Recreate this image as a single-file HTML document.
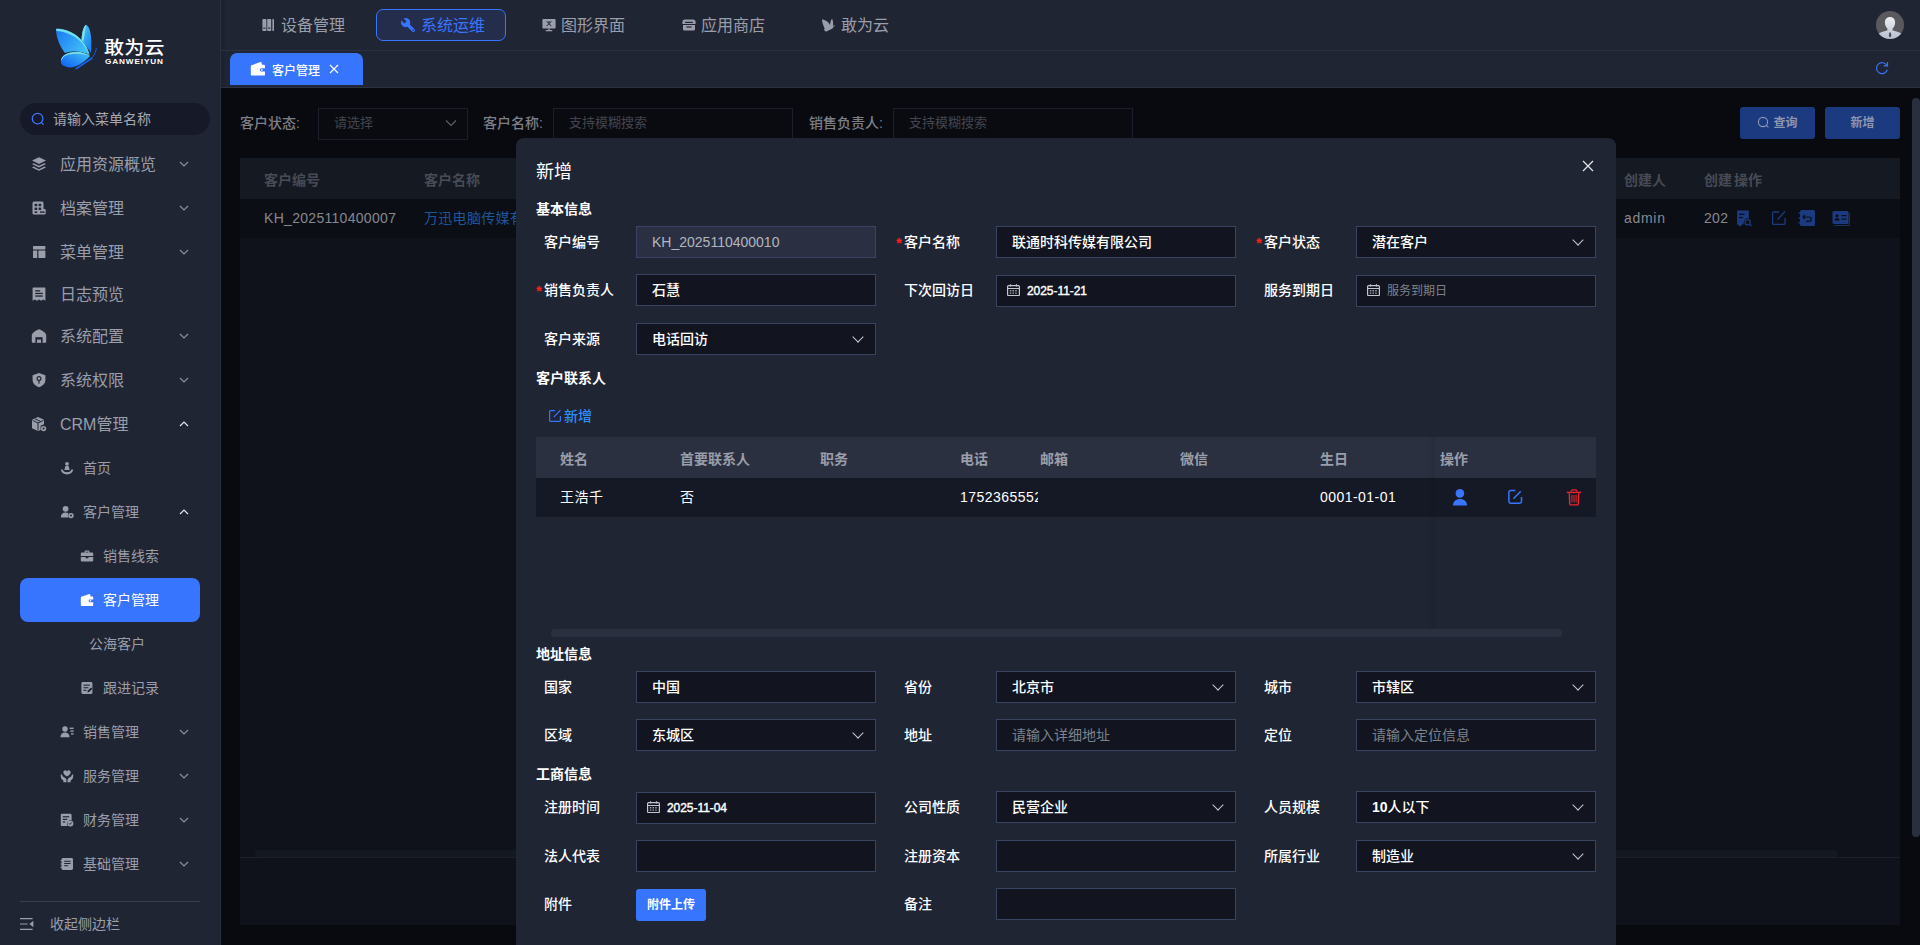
<!DOCTYPE html>
<html lang="zh-CN">
<head>
<meta charset="utf-8">
<title>客户管理</title>
<style>
*{box-sizing:border-box;margin:0;padding:0}
html,body{width:1920px;height:945px;overflow:hidden;background:#090a10}
body{position:relative;font-family:"Liberation Sans","Noto Sans CJK SC",sans-serif;font-size:14px;color:#fff;-webkit-font-smoothing:antialiased}
.abs{position:absolute}
svg{display:block}
/* ---------- sidebar ---------- */
#side{position:absolute;left:0;top:0;width:221px;height:945px;background:#202534;border-right:1px solid #2b3042}
#search{position:absolute;left:20px;top:103px;width:190px;height:32px;border-radius:16px;background:#161a28}
#search span{position:absolute;left:33px;top:0;line-height:32px;font-size:14px;color:#a4a8b3}
.m1{position:absolute;left:0;width:220px;height:44px}
.m1 .ic{position:absolute;left:31px;top:14px;width:16px;height:16px}
.m1 .tx{position:absolute;left:60px;top:1px;line-height:44px;font-size:16px;color:#9a9eaa;white-space:nowrap}
.m2 .ic{left:60px;top:15px;width:14px;height:14px}
.m2 .tx{left:83px;font-size:14px;top:0}
.m3 .ic{left:80px;top:15px;width:14px;height:14px}
.m3 .tx{left:103px;font-size:14px;top:0}
.arr{position:absolute;left:179px;top:18px;width:10px;height:8px}
#active{position:absolute;left:20px;top:578px;width:180px;height:44px;border-radius:8px;background:#3875ff}
/* ---------- top ---------- */
#top{position:absolute;left:221px;top:0;width:1699px;height:51px;background:linear-gradient(to right,#1c202d,#202534 6px);border-bottom:1px solid #2c3142}
.nav{position:absolute;top:10px;height:32px;line-height:32px;font-size:16px;color:#9a9eaa;white-space:nowrap}
.nav svg{position:absolute;top:8px}
#navsel{position:absolute;left:155px;top:9px;width:130px;height:32px;border:1px solid #3875ff;border-radius:7px;background:#252d4d}
#tabs{position:absolute;left:221px;top:51px;width:1699px;height:37px;background:linear-gradient(to right,#1c202d,#202534 6px);border-bottom:1px solid #2c3142}
#tab{position:absolute;left:9px;top:2px;width:133px;height:32px;background:#3875ff;border-radius:7px 7px 0 0}
#tab span{position:absolute;left:42px;top:0;line-height:36px;font-size:12px;color:#fff;font-weight:500}
/* ---------- content (dimmed) ---------- */
#content{position:absolute;left:221px;top:88px;width:1699px;height:857px;background:#090a10}
.flabel{position:absolute;top:19px;line-height:32px;font-size:14px;color:#7c7f87;white-space:nowrap;font-weight:500}
.finput{position:absolute;top:20px;height:32px;border:1px solid #1b1f2c;background:#0a0b11;font-size:13px;color:#42454e;line-height:28px;padding-left:15px}
.btn{position:absolute;top:19px;width:75px;height:32px;border-radius:3px;background:#1c3a80;color:#8c96b0;font-size:12px;line-height:32px;text-align:center;font-weight:bold}
#panel{position:absolute;left:19px;top:70px;width:1660px;height:767px;background:#0f121b}
#thead{position:absolute;left:0;top:0;width:1660px;height:41px;background:#151922}
#thead span{position:absolute;top:0;line-height:44px;font-size:14px;font-weight:bold;color:#474b55;white-space:nowrap}
#trow{position:absolute;left:0;top:41px;width:1660px;height:39px;background:#0c0e16}
#trow span{position:absolute;top:0;line-height:38px;font-size:14px;color:#85888f;white-space:nowrap;letter-spacing:0.3px}

/* ---------- modal ---------- */
#modal{position:absolute;left:516px;top:138px;width:1100px;height:820px;background:#202534;border-radius:8px}
.mtitle{position:absolute;left:20px;top:20px;line-height:28px;font-size:18px;color:#fff}
.sec{position:absolute;left:20px;line-height:22px;font-size:14px;font-weight:bold;color:#fff;white-space:nowrap}
.lb{position:absolute;height:32px;line-height:32px;font-size:14px;color:#fff;white-space:nowrap;font-weight:500}
.lb i{position:absolute;left:-8px;top:1px;font-style:normal;color:#ff1f1f;font-weight:bold;font-size:15px}
.in{position:absolute;width:240px;height:32px;border:1px solid #394460;background:#12151f;line-height:30px;font-size:14px;color:#fff;padding-left:15px;white-space:nowrap;font-weight:500}
.in.dis{background:#2a3041;color:#b3b6c0;font-weight:normal;border-color:#3b4364}
.in.ph{color:#7e828c;font-weight:normal}
.in.sel::after{content:"";position:absolute;right:13px;top:9px;width:7px;height:7px;border-right:1.400px solid #c5c8d0;border-bottom:1.400px solid #c5c8d0;transform:rotate(45deg)}
.in.date{font-size:12px;padding-left:30px;font-weight:normal;-webkit-text-stroke:0.4px #fff;letter-spacing:-0.05px}
.in.date.ph{-webkit-text-stroke:0;letter-spacing:0}
.th{position:absolute;top:301px;line-height:40px;font-size:14px;font-weight:bold;color:#9a9eaa;white-space:nowrap}
.td{position:absolute;top:339px;line-height:40px;font-size:14px;color:#fff;white-space:nowrap;letter-spacing:0.45px}
</style>
</head>
<body>
<!-- SIDEBAR -->
<div id="side">
  <!-- logo -->
  <svg class="abs" style="left:54px;top:23px" width="46" height="48" viewBox="0 0 46 48">
    <defs>
      <linearGradient id="lg1" x1="0" y1="0" x2="1" y2="0.6"><stop offset="0" stop-color="#1b74f2"/><stop offset="1" stop-color="#40c1f8"/></linearGradient>
      <linearGradient id="lg2" x1="0" y1="1" x2="1" y2="0.2"><stop offset="0" stop-color="#0d5cf0"/><stop offset="1" stop-color="#3fbdf7"/></linearGradient>
      <linearGradient id="lg3" x1="0.2" y1="0" x2="0.8" y2="1"><stop offset="0" stop-color="#45c3f8"/><stop offset="1" stop-color="#1a7df0"/></linearGradient>
    </defs>
    <path d="M27.500 17 C28 9 29.500 3.500 32 1.800 C36 3 38.500 14 37 30 C34 26 31 21 27.500 17 Z" fill="url(#lg3)"/>
    <path d="M27.500 17 C28 9 29.500 3.500 32 1.800 C31.500 6 31 12 29.200 18.800 Z" fill="#7be3e6"/>
    <path d="M2 6 C10 5 22 10 29 19 C33 24 35 29 35.5 32 C30 29 20 27 11 30 C6 24 2 14 2 6 Z" fill="url(#lg1)"/>
    <path d="M2 6 C10 5 22 10 29 19 C33 24 35 29 35.5 32 C33 26 30 22 27 19 C20 12 10 8 2.5 8 Z" fill="#6fe0e8"/>
    <path d="M7 37 C8 32 14 29 22 29 C28 29 33 31 36 33 C30 40 20 46 13 44 C9 43 6 41 7 37 Z" fill="url(#lg2)"/>
    <path d="M7 37 C8 32 14 29 22 29 C28 29 33 31 36 33 C30 31 24 30.5 19 31 C13 31.5 9 33 7.5 37.5 Z" fill="#79e2e4"/>
    <path d="M21 45.5 L38 34 L39 35.5 L22.5 46.5 Z" fill="#1565f0"/>
    <path d="M38.5 34 C41 31 42 28 42.3 25" stroke="#1565f0" stroke-width="0.9" fill="none"/>
  </svg>
  <div class="abs" style="left:104px;top:33px;font-size:20px;line-height:26px;color:#fff;letter-spacing:0.3px;white-space:nowrap;font-weight:500;transform-origin:0 100%;transform:translateY(0.5px) scale(1,0.92)">敢为云</div>
  <div class="abs" style="left:105px;top:57px;font-size:7px;line-height:9px;color:#fff;letter-spacing:0.75px;white-space:nowrap;font-weight:bold;transform-origin:0 0;transform:translateY(-0.5px) scale(1.17,1.05)">GANWEIYUN</div>
  <!-- search -->
  <div id="search">
    <svg class="abs" style="left:10px;top:8px" width="16" height="16" viewBox="0 0 16 16"><circle cx="7.6" cy="7.6" r="5.3" fill="none" stroke="#3875ff" stroke-width="1.3"/><path d="M11.4 11.6 L13.2 13.4" stroke="#3875ff" stroke-width="1.3" stroke-linecap="round"/></svg>
    <span>请输入菜单名称</span>
  </div>
  <div id="active"></div>
  <!-- level 1 -->
  <div class="m1" style="top:142px"><svg class="ic" viewBox="0 0 16 16"><path d="M8 1.2 L15 4.6 L8 8 L1 4.6 Z" fill="#9a9eaa"/><path d="M2.6 7.2 L1 8 L8 11.4 L15 8 L13.4 7.2 L8 9.8 Z" fill="#9a9eaa"/><path d="M2.6 10.6 L1 11.4 L8 14.8 L15 11.4 L13.4 10.6 L8 13.2 Z" fill="#9a9eaa"/></svg><span class="tx">应用资源概览</span><svg class="arr" viewBox="0 0 10 8"><path d="M1 2 L5 6 L9 2" fill="none" stroke="#8d919d" stroke-width="1.2"/></svg></div>
  <div class="m1" style="top:186px"><svg class="ic" viewBox="0 0 16 16"><path d="M3 1.5 h8 a1.5 1.5 0 0 1 1.5 1.5 v6 h1.2 a1 1 0 0 1 1 1 v3 a1.5 1.5 0 0 1 -1.5 1.5 h-10.2 a1.5 1.5 0 0 1 -1.5 -1.5 v-10 a1.5 1.5 0 0 1 1.5 -1.5 Z" fill="#9a9eaa"/><rect x="3.6" y="3.8" width="2.6" height="2.4" fill="#202534"/><rect x="7.6" y="3.8" width="2.6" height="2.4" fill="#202534"/><rect x="3.6" y="7.6" width="2.6" height="2.4" fill="#202534"/><rect x="7.6" y="7.6" width="2.6" height="2.4" fill="#202534"/><rect x="3.6" y="11.4" width="2.6" height="1.6" fill="#202534"/><rect x="9" y="11.4" width="4.6" height="1.4" fill="#202534"/></svg><span class="tx">档案管理</span><svg class="arr" viewBox="0 0 10 8"><path d="M1 2 L5 6 L9 2" fill="none" stroke="#8d919d" stroke-width="1.2"/></svg></div>
  <div class="m1" style="top:230px"><svg class="ic" viewBox="0 0 16 16"><rect x="2" y="2" width="12.4" height="3.4" rx="0.6" fill="#9a9eaa"/><rect x="2" y="6.6" width="4.2" height="7.4" rx="0.6" fill="#9a9eaa"/><rect x="7.4" y="6.6" width="7" height="7.4" rx="0.6" fill="#9a9eaa"/></svg><span class="tx">菜单管理</span><svg class="arr" viewBox="0 0 10 8"><path d="M1 2 L5 6 L9 2" fill="none" stroke="#8d919d" stroke-width="1.2"/></svg></div>
  <div class="m1" style="top:272px"><svg class="ic" viewBox="0 0 16 16"><path d="M2.2 1.5 h11.6 a0.6 0.6 0 0 1 .6 .6 v12.6 l-2.1 -1.3 l-2.1 1.3 l-2.1 -1.3 l-2.1 1.3 l-2.1 -1.3 l-2.3 1.3 v-12.6 a0.6 0.6 0 0 1 .6 -.6 Z" fill="#9a9eaa"/><rect x="4.2" y="4.2" width="5" height="1.3" fill="#202534"/><rect x="4.2" y="6.8" width="7.6" height="1.3" fill="#202534"/><rect x="4.2" y="9.4" width="7.6" height="1.3" fill="#202534"/></svg><span class="tx">日志预览</span></div>
  <div class="m1" style="top:314px"><svg class="ic" viewBox="0 0 16 16"><path d="M8 1.2 C11 2 15 5 15.2 7 V14 a0.8 0.8 0 0 1 -.8 .8 H1.6 a0.8 0.8 0 0 1 -.8 -.8 V7 C1 5 5 2 8 1.2 Z" fill="#9a9eaa"/><rect x="4.4" y="9.2" width="7.2" height="5.6" fill="#202534"/><rect x="6" y="11.6" width="4" height="3.2" fill="#9a9eaa"/></svg><span class="tx">系统配置</span><svg class="arr" viewBox="0 0 10 8"><path d="M1 2 L5 6 L9 2" fill="none" stroke="#8d919d" stroke-width="1.2"/></svg></div>
  <div class="m1" style="top:358px"><svg class="ic" viewBox="0 0 16 16"><path d="M8 1 L14.4 3.2 V8 C14.4 11.6 11.6 14 8 15.2 C4.400 14 1.6 11.6 1.6 8 V3.2 Z" fill="#9a9eaa"/><circle cx="8" cy="6.6" r="1.9" fill="none" stroke="#202534" stroke-width="1.2"/><rect x="7.4" y="8" width="1.2" height="3.6" fill="#202534"/></svg><span class="tx">系统权限</span><svg class="arr" viewBox="0 0 10 8"><path d="M1 2 L5 6 L9 2" fill="none" stroke="#8d919d" stroke-width="1.2"/></svg></div>
  <div class="m1" style="top:402px"><svg class="ic" viewBox="0 0 16 16"><path d="M7 1 L13 3.8 V8.200 L9.600 9.800 V14 L7 15 L1 12.2 V3.800 Z" fill="#9a9eaa"/><path d="M1.6 4.400 L7 7 L12.400 4.400 M7 7 V14.400 M4 2.800 L9.800 5.600" stroke="#202534" stroke-width="1" fill="none"/><circle cx="12.600" cy="12.600" r="2.600" fill="#9a9eaa"/><circle cx="12.600" cy="12.600" r="1" fill="#202534"/></svg><span class="tx">CRM管理</span><svg class="arr" viewBox="0 0 10 8"><path d="M1 6 L5 2 L9 6" fill="none" stroke="#e4e6ea" stroke-width="1.2"/></svg></div>
  <!-- level 2 -->
  <div class="m1 m2" style="top:446px"><svg class="ic" viewBox="0 0 14 14"><circle cx="7" cy="2.8" r="1.9" fill="#9a9eaa"/><path d="M5.400 5 h3.200 l1 4 h-5.200 Z" fill="#9a9eaa"/><path d="M1 8.600 h1.600 c.400 1.600 2 2.600 4.400 2.600 s4 -1 4.400 -2.600 H13 v1 c-.600 2.400 -2.800 3.800 -6 3.800 s-5.400 -1.400 -6 -3.800 Z" fill="#9a9eaa"/></svg><span class="tx">首页</span></div>
  <div class="m1 m2" style="top:490px"><svg class="ic" viewBox="0 0 14 14"><circle cx="5.600" cy="3.800" r="2.900" fill="#9a9eaa"/><path d="M0.800 12.600 C0.800 9.400 2.800 7.600 5.600 7.600 C6.800 7.600 7.800 7.900 8.600 8.500 C7.600 9.600 7.600 11.400 8.600 12.600 Z" fill="#9a9eaa"/><circle cx="11" cy="10.600" r="2.700" fill="#9a9eaa"/><circle cx="11" cy="10.600" r="1" fill="#202534"/></svg><span class="tx">客户管理</span><svg class="arr" viewBox="0 0 10 8"><path d="M1 6 L5 2 L9 6" fill="none" stroke="#e4e6ea" stroke-width="1.2"/></svg></div>
  <!-- level 3 -->
  <div class="m1 m3" style="top:534px"><svg class="ic" viewBox="0 0 14 14"><path d="M4.600 3.600 V2.600 a1 1 0 0 1 1 -1 h2.800 a1 1 0 0 1 1 1 v1 h2.800 a1 1 0 0 1 1 1 V7 H0.800 V4.600 a1 1 0 0 1 1 -1 Z M5.800 2.800 v.8 h2.400 v-.8 Z" fill="#9a9eaa" fill-rule="evenodd"/><path d="M0.800 8 H5.600 v1.200 h2.800 V8 H13.200 v3.600 a1 1 0 0 1 -1 1 H1.800 a1 1 0 0 1 -1 -1 Z" fill="#9a9eaa"/></svg><span class="tx">销售线索</span></div>
  <div class="m1 m3" style="top:578px"><svg class="ic" viewBox="0 0 14 14"><path d="M2 3.600 L9.400 1 a0.600 0.600 0 0 1 .8 .4 L10.600 3.400 H12.200 a1 1 0 0 1 1 1 V6.400 H10 a1.400 1.400 0 0 0 0 2.800 H13.200 V12 a1 1 0 0 1 -1 1 H1.800 a1 1 0 0 1 -1 -1 V4.800 a1.200 1.200 0 0 1 1.200 -1.200 Z" fill="#fff"/><circle cx="10.400" cy="7.800" r="0.800" fill="#fff"/></svg><span class="tx" style="color:#fff">客户管理</span></div>
  <div class="m1 m3" style="top:622px"><span class="tx" style="left:89px">公海客户</span></div>
  <div class="m1 m3" style="top:666px"><svg class="ic" viewBox="0 0 14 14"><rect x="1.400" y="1" width="11" height="12" rx="1.400" fill="#9a9eaa"/><rect x="3.400" y="3.600" width="6.600" height="1.100" fill="#202534"/><rect x="3.400" y="6.200" width="5" height="1.100" fill="#202534"/><rect x="3.400" y="8.800" width="3" height="1.100" fill="#202534"/><path d="M7.400 11.400 L7.800 9.600 L11 6.400 L12.400 7.800 L9.200 11 Z" fill="#202534"/></svg><span class="tx">跟进记录</span></div>
  <div class="m1 m2" style="top:710px"><svg class="ic" viewBox="0 0 14 14"><circle cx="5" cy="4" r="2.700" fill="#9a9eaa"/><path d="M0.400 12.200 C0.400 9.200 2.400 7.400 5 7.400 S9.600 9.200 9.600 12.200 Z" fill="#9a9eaa"/><rect x="9.600" y="2.600" width="4" height="1.400" fill="#9a9eaa"/><rect x="10.400" y="5.400" width="3.200" height="1.400" fill="#9a9eaa"/><rect x="11" y="8.200" width="2.600" height="1.400" fill="#9a9eaa"/></svg><span class="tx">销售管理</span><svg class="arr" viewBox="0 0 10 8"><path d="M1 2 L5 6 L9 2" fill="none" stroke="#8d919d" stroke-width="1.2"/></svg></div>
  <div class="m1 m2" style="top:754px"><svg class="ic" viewBox="0 0 14 14"><path d="M7 7.600 C4.600 6 3.400 4.800 3.400 3.200 C3.400 1.200 6 0.600 7 2.400 C8 0.600 10.600 1.200 10.600 3.200 C10.600 4.800 9.400 6 7 7.600 Z" fill="#9a9eaa"/><path d="M0.800 5.200 C2 5.200 2.400 6 2.600 7.200 L5.600 9.200 C6.600 10 6.600 11.400 6.400 13.200 H3.400 V11.400 C1.600 10.600 0.800 9 0.800 7.200 Z" fill="#9a9eaa"/><path d="M13.200 5.200 C12 5.200 11.600 6 11.400 7.200 L8.400 9.200 C7.400 10 7.400 11.400 7.600 13.200 H10.600 V11.400 C12.400 10.600 13.200 9 13.200 7.200 Z" fill="#9a9eaa"/></svg><span class="tx">服务管理</span><svg class="arr" viewBox="0 0 10 8"><path d="M1 2 L5 6 L9 2" fill="none" stroke="#8d919d" stroke-width="1.2"/></svg></div>
  <div class="m1 m2" style="top:798px"><svg class="ic" viewBox="0 0 14 14"><path d="M1.800 0.800 h8.400 a1.400 1.400 0 0 1 1.400 1.400 v5 a3.800 3.800 0 0 0 -4 5.800 H1.800 a1 1 0 0 1 -1 -1 V1.800 a1 1 0 0 1 1 -1 Z" fill="#9a9eaa"/><rect x="2.800" y="3.200" width="6.400" height="1.200" fill="#202534"/><rect x="2.800" y="5.800" width="4.400" height="1.200" fill="#202534"/><rect x="2.800" y="8.400" width="2.400" height="1.200" fill="#202534"/><circle cx="10.400" cy="10.400" r="3" fill="#9a9eaa"/><path d="M9 10.400 L10 11.400 L11.800 9.400" stroke="#202534" stroke-width="1" fill="none"/></svg><span class="tx">财务管理</span><svg class="arr" viewBox="0 0 10 8"><path d="M1 2 L5 6 L9 2" fill="none" stroke="#8d919d" stroke-width="1.2"/></svg></div>
  <div class="m1 m2" style="top:842px"><svg class="ic" viewBox="0 0 14 14"><rect x="1.600" y="1" width="11.400" height="12" rx="1.400" fill="#9a9eaa"/><rect x="0.600" y="3" width="2" height="1.200" fill="#9a9eaa"/><rect x="0.600" y="6.400" width="2" height="1.200" fill="#9a9eaa"/><rect x="0.600" y="9.800" width="2" height="1.200" fill="#9a9eaa"/><rect x="4.200" y="3.800" width="6.400" height="1" fill="#202534"/><rect x="4.200" y="6" width="6.400" height="1" fill="#202534"/><rect x="4.200" y="8.200" width="4" height="1" fill="#202534"/></svg><span class="tx">基础管理</span><svg class="arr" viewBox="0 0 10 8"><path d="M1 2 L5 6 L9 2" fill="none" stroke="#8d919d" stroke-width="1.2"/></svg></div>
  <div class="abs" style="left:20px;top:901px;width:180px;height:1px;background:#3a3f50"></div>
  <svg class="abs" style="left:20px;top:917px" width="14" height="14" viewBox="0 0 14 14"><path d="M0 1.600 H12.600 M0 7 H7.600 M0 12.400 H12.600" stroke="#9a9eaa" stroke-width="1.200"/><path d="M13.400 3.800 V10.200 L9.400 7 Z" fill="#9a9eaa"/></svg>
  <div class="abs" style="left:50px;top:913px;line-height:22px;font-size:14px;color:#9a9eaa;white-space:nowrap">收起侧边栏</div>
</div>
<!-- TOP NAV -->
<div id="top">
  <div id="navsel"></div>
  <div class="nav" style="left:60px"><svg style="left:-19px" width="14" height="14" viewBox="0 0 14 14"><rect x="0.400" y="1" width="4" height="12" rx="0.800" fill="#9a9eaa"/><rect x="5.200" y="1" width="4" height="12" rx="0.800" fill="#9a9eaa"/><rect x="10.400" y="1" width="1.600" height="12" rx="0.600" fill="#9a9eaa"/><rect x="1.200" y="9.600" width="2.400" height="1" fill="#202534"/><rect x="6" y="9.600" width="2.400" height="1" fill="#202534"/></svg>设备管理</div>
  <div class="nav" style="left:200px;color:#3875ff"><svg style="left:-21px;top:7px" width="16" height="16" viewBox="0 0 16 16"><circle cx="5.600" cy="5.600" r="4.600" fill="#3875ff"/><path d="M5.400 5.400 L0.500 0.500" stroke="#252d4d" stroke-width="3"/><path d="M8 8 L13.400 13.400" stroke="#3875ff" stroke-width="3.200" stroke-linecap="round"/><circle cx="13.200" cy="13.200" r="0.700" fill="#252d4d"/></svg>系统运维</div>
  <div class="nav" style="left:340px"><svg style="left:-19px" width="14" height="14" viewBox="0 0 14 14"><rect x="0.400" y="1" width="13.200" height="9.400" rx="1" fill="#9a9eaa"/><rect x="6.300" y="10.400" width="1.400" height="1.800" fill="#9a9eaa"/><rect x="3.600" y="12" width="6.800" height="1.300" rx="0.500" fill="#9a9eaa"/><path d="M4.600 3.200 L9.400 8.200 M9.400 3.200 L4.600 8.200 M7 3 V5" stroke="#202534" stroke-width="1" fill="none"/></svg>图形界面</div>
  <div class="nav" style="left:480px"><svg style="left:-19px" width="14" height="14" viewBox="0 0 14 14"><path d="M2.600 1.400 h8.800 a2.400 2.400 0 0 1 2.200 2.400 v2.200 h-13.200 v-2.200 a2.400 2.400 0 0 1 2.200 -2.400 Z" fill="#9a9eaa"/><rect x="3" y="3.800" width="8" height="1.200" fill="#202534"/><path d="M1 7 H13 V11.200 a1.400 1.400 0 0 1 -1.400 1.400 H2.400 a1.400 1.400 0 0 1 -1.400 -1.400 Z" fill="#9a9eaa"/><rect x="4.400" y="8.400" width="5.200" height="1.200" fill="#202534"/></svg>应用商店</div>
  <div class="nav" style="left:620px"><svg style="left:-20px" width="15" height="14" viewBox="0 0 15 14"><path d="M1 1.600 C4 1.600 7.400 4 9 7 C9.400 4 10 1.600 11 0.800 C12.400 3 12.400 8 11.600 10.400 L5.400 13.400 C3.600 13.400 2.600 12 3.600 10.200 C2.400 8 1 4.600 1 1.600 Z" fill="#9a9eaa"/><path d="M11.600 10 L13.600 7" stroke="#9a9eaa" stroke-width="0.800"/></svg>敢为云</div>
  <!-- avatar -->
  <svg class="abs" style="left:1654px;top:10px" width="30" height="30" viewBox="0 0 30 30">
    <defs><clipPath id="avc"><circle cx="15" cy="15" r="14"/></clipPath><linearGradient id="avg" x1="0" y1="0" x2="0" y2="1"><stop offset="0" stop-color="#eceef2"/><stop offset="1" stop-color="#b4bccd"/></linearGradient></defs>
    <circle cx="15" cy="15" r="14" fill="#5a5a5e"/>
    <g clip-path="url(#avc)"><path d="M15 7 C18.200 7 20.300 9.400 20.100 13 C20 15.600 18.800 17.400 17.600 18.400 V20.600 C21 21.400 25.500 22.400 27 24.400 V30 H3 V24.400 C4.500 22.400 9 21.400 12.400 20.600 V18.400 C11.200 17.400 10 15.600 9.900 13 C9.700 9.400 11.800 7 15 7 Z" fill="url(#avg)"/><path d="M14.300 22.400 h1.500 l.5 3.600 l-1.200 1.600 l-1.300 -1.600 Z" fill="#4a4d5a"/></g>
  </svg>
</div>
<div id="tabs">
  <div id="tab">
    <svg class="abs" style="left:20px;top:8px" width="16" height="15" viewBox="0 0 16 15"><path d="M2.200 4 L10.600 1 a0.700 0.700 0 0 1 .9 .5 L12 3.800 H13.800 a1.200 1.200 0 0 1 1.200 1.200 V7.200 H11.400 a1.600 1.600 0 0 0 0 3.200 H15 V13.400 a1.200 1.200 0 0 1 -1.200 1.200 H2 a1.200 1.200 0 0 1 -1.200 -1.200 V5.400 a1.400 1.400 0 0 1 1.400 -1.400 Z" fill="#fff"/><circle cx="11.800" cy="8.800" r="0.900" fill="#fff"/></svg>
    <span>客户管理</span>
    <svg class="abs" style="left:99px;top:11px" width="10" height="10" viewBox="0 0 10 10"><path d="M1 1 L9 9 M9 1 L1 9" stroke="#fff" stroke-width="1.100"/></svg>
  </div>
  <svg class="abs" style="left:1654.300px;top:10px" width="14" height="14" viewBox="0 0 14 14"><path d="M11.900 4.600 A5.500 5.500 0 1 0 12.300 8.800" fill="none" stroke="#3875ff" stroke-width="1.200"/><path d="M12.500 1 V4.900 H8.700" fill="none" stroke="#3875ff" stroke-width="1.200"/></svg>
</div>
<!-- CONTENT -->
<div id="content">
  <div class="flabel" style="left:19px">客户状态:</div>
  <div class="finput" style="left:97px;width:150px">请选择<svg class="abs" style="right:10px;top:10px" width="12" height="8" viewBox="0 0 12 8"><path d="M1 1.500 L6 6.500 L11 1.500" fill="none" stroke="#5a5e68" stroke-width="1.200"/></svg></div>
  <div class="flabel" style="left:262px">客户名称:</div>
  <div class="finput" style="left:332px;width:240px">支持模糊搜索</div>
  <div class="flabel" style="left:588px">销售负责人:</div>
  <div class="finput" style="left:672px;width:240px">支持模糊搜索</div>
  <div class="btn" style="left:1519px"><svg class="abs" style="left:17px;top:9px" width="13" height="13" viewBox="0 0 13 13"><circle cx="6" cy="6" r="4.600" fill="none" stroke="#8d99b5" stroke-width="1.100"/><path d="M9.400 9.400 L11.400 11.400" stroke="#8d99b5" stroke-width="1.100"/></svg><span style="margin-left:16px">查询</span></div>
  <div class="btn" style="left:1604px">新增</div>
  <div id="panel">
    <div id="thead"><span style="left:24px">客户编号</span><span style="left:184px">客户名称</span><span style="left:1384px">创建人</span><span style="left:1464px">创建</span><span style="left:1494px">操作</span></div>
    <div id="trow"><span style="left:24px">KH_2025110400007</span><span style="left:184px;color:#1c5799">万迅电脑传媒有</span><span style="left:1384px;letter-spacing:0.7px">admin</span><span style="left:1464px">202</span>
      <svg class="abs" style="left:1496px;top:10.500px" width="17" height="17" viewBox="0 0 16 16"><path d="M1 0.500 H12 V8 a4 4 0 0 0 -4 6.400 L6.500 13 L4 15.500 L1 13.500 Z" fill="#1c3a80"/><rect x="3" y="3.500" width="5" height="1.200" fill="#0c0e16"/><rect x="3" y="6.500" width="3.500" height="1.200" fill="#0c0e16"/><circle cx="11" cy="11.500" r="2.400" fill="none" stroke="#1c3a80" stroke-width="1.200"/><path d="M12.800 13.300 L14.600 15.100" stroke="#1c3a80" stroke-width="1.200"/></svg>
      <svg class="abs" style="left:1531px;top:11px" width="16" height="16" viewBox="0 0 16 16"><path d="M8 2 H2.600 a1 1 0 0 0 -1 1 V13.400 a1 1 0 0 0 1 1 H13 a1 1 0 0 0 1 -1 V8" fill="none" stroke="#1c3a80" stroke-width="1.300"/><path d="M6.500 9.500 L14 1.500" stroke="#1c3a80" stroke-width="1.300"/></svg>
      <svg class="abs" style="left:1558px;top:10px" width="18" height="18" viewBox="0 0 18 18"><rect x="2" y="1" width="15" height="16" rx="1.500" fill="#1c3a80"/><rect x="0.500" y="3.500" width="2" height="1.400" fill="#1c3a80"/><rect x="0.500" y="8.300" width="2" height="1.400" fill="#1c3a80"/><rect x="0.500" y="13" width="2" height="1.400" fill="#1c3a80"/><path d="M7 6 L5 8 L7 10 M5 8 H11 a2.200 2.200 0 0 1 0 4.400 H8" fill="none" stroke="#0c0e16" stroke-width="1.200"/></svg>
      <svg class="abs" style="left:1592px;top:10px" width="18" height="18" viewBox="0 0 18 18"><rect x="0.500" y="2" width="16" height="13" rx="1.500" fill="#1c3a80"/><path d="M2.500 16.500 H17.500 V4" fill="none" stroke="#1c3a80" stroke-width="0.800"/><circle cx="5" cy="6.800" r="1.500" fill="#0c0e16"/><path d="M2.500 11.500 a2.500 2.500 0 0 1 5 0 Z" fill="#0c0e16"/><rect x="9.500" y="6" width="5" height="1.200" fill="#0c0e16"/><rect x="9.500" y="9.500" width="5" height="1.200" fill="#0c0e16"/></svg>
    </div>
    <div class="abs" style="left:15px;top:692px;width:1583px;height:7px;border-radius:3.5px;background:#141821"></div>
    <div class="abs" style="left:0;top:699px;width:1660px;height:1px;background:#1a1f2b"></div>
  </div>
  <div class="abs" style="left:1691px;top:10px;width:8px;height:739px;border-radius:4px;background:#2a2f3f"></div>
</div>
<!-- MODAL -->
<div id="modal">
  <div class="mtitle">新增</div>
  <svg class="abs" style="left:1066px;top:22px" width="12" height="12" viewBox="0 0 12 12"><path d="M1 1 L11 11 M11 1 L1 11" stroke="#e6e8ee" stroke-width="1.200"/></svg>
  <div class="sec" style="top:60px">基本信息</div>
  <!-- row 1 -->
  <div class="lb" style="left:28px;top:88px">客户编号</div>
  <div class="in dis" style="left:120px;top:88px">KH_2025110400010</div>
  <div class="lb" style="left:388px;top:88px"><i>*</i>客户名称</div>
  <div class="in" style="left:480px;top:88px">联通时科传媒有限公司</div>
  <div class="lb" style="left:748px;top:88px"><i>*</i>客户状态</div>
  <div class="in sel" style="left:840px;top:88px">潜在客户</div>
  <!-- row 2 -->
  <div class="lb" style="left:28px;top:136px"><i>*</i>销售负责人</div>
  <div class="in" style="left:120px;top:136px">石慧</div>
  <div class="lb" style="left:388px;top:136px">下次回访日</div>
  <div class="in date" style="left:480px;top:137px"><svg class="abs" style="left:10px;top:8px" width="13" height="12.300" preserveAspectRatio="none" viewBox="0 0 13 13"><rect x="0.600" y="1.700" width="11.800" height="10.600" rx="1" fill="none" stroke="#c3c6cd" stroke-width="1.200"/><path d="M0.600 4.700 H12.400 M3.500 0.200 V2.600 M9.500 0.200 V2.600" stroke="#c3c6cd" stroke-width="1.200" fill="none"/><path d="M2.800 7.100 H10.400 M2.800 9.700 H10.400" stroke="#9fa3ad" stroke-width="1.400" stroke-dasharray="1.500 1.200" fill="none"/></svg>2025-11-21</div>
  <div class="lb" style="left:748px;top:136px">服务到期日</div>
  <div class="in date ph" style="left:840px;top:137px"><svg class="abs" style="left:10px;top:8px" width="13" height="12.300" preserveAspectRatio="none" viewBox="0 0 13 13"><rect x="0.600" y="1.700" width="11.800" height="10.600" rx="1" fill="none" stroke="#c3c6cd" stroke-width="1.200"/><path d="M0.600 4.700 H12.400 M3.500 0.200 V2.600 M9.500 0.200 V2.600" stroke="#c3c6cd" stroke-width="1.200" fill="none"/><path d="M2.800 7.100 H10.400 M2.800 9.700 H10.400" stroke="#9fa3ad" stroke-width="1.400" stroke-dasharray="1.500 1.200" fill="none"/></svg>服务到期日</div>
  <!-- row 3 -->
  <div class="lb" style="left:28px;top:185px">客户来源</div>
  <div class="in sel" style="left:120px;top:185px">电话回访</div>
  <div class="sec" style="top:229px">客户联系人</div>
  <!-- contact table -->
  <svg class="abs" style="left:32px;top:271px" width="14" height="14" viewBox="0 0 14 14"><path d="M7 1.600 H2.400 a0.800 0.800 0 0 0 -.8 .8 V11.600 a0.800 0.800 0 0 0 .8 .8 H11.600 a0.800 0.800 0 0 0 .8 -.8 V7" fill="none" stroke="#3875ff" stroke-width="1.200"/><path d="M5.800 8.200 L12.400 1.200" stroke="#3875ff" stroke-width="1.200"/></svg>
  <div class="abs" style="left:48px;top:267px;line-height:23px;font-size:14px;color:#2f8cff;font-weight:500">新增</div>
  <div class="abs" style="left:20px;top:299px;width:1060px;height:41px;background:#2b3041"></div>
  <div class="th" style="left:44px">姓名</div><div class="th" style="left:164px">首要联系人</div><div class="th" style="left:304px">职务</div><div class="th" style="left:444px">电话</div><div class="th" style="left:524px">邮箱</div><div class="th" style="left:664px">微信</div><div class="th" style="left:804px">生日</div><div class="th" style="left:924px">操作</div>
  <div class="abs" style="left:20px;top:340px;width:1060px;height:39px;background:#151926"></div>
  <div class="td" style="left:44px">王浩千</div><div class="td" style="left:164px">否</div><div class="td" style="left:444px;width:78px;overflow:hidden">1752365552</div><div class="td" style="left:804px">0001-01-01</div>
  <div class="abs" style="left:910px;top:299px;width:9px;height:192px;background:linear-gradient(to right,rgba(0,0,0,0),rgba(0,0,0,0.09))"></div>
  <svg class="abs" style="left:936px;top:350px" width="16" height="18" viewBox="0 0 16 18"><circle cx="7.900" cy="5.400" r="4.300" fill="#3875ff"/><path d="M1 17.400 C1 13.400 4 11 8 11 S15 13.400 15 17.400 Z" fill="#3875ff"/></svg>
  <svg class="abs" style="left:990.500px;top:351px" width="16" height="16" viewBox="0 0 17 17"><path d="M9 1.700 H3.800 a1.800 1.800 0 0 0 -1.800 1.800 V13.400 a1.800 1.800 0 0 0 1.800 1.800 H13.600 a1.800 1.800 0 0 0 1.800 -1.800 V8.400" fill="none" stroke="#3875ff" stroke-width="1.600"/><path d="M6.800 10.400 L14.600 2.400" stroke="#3875ff" stroke-width="1.600"/></svg>
  <svg class="abs" style="left:1049.500px;top:351px" width="16" height="17" viewBox="0 0 16 17"><path d="M5.200 2.800 V1.700 a0.900 0.900 0 0 1 .9 -.9 h3.800 a0.900 0.900 0 0 1 .9 .9 V2.800" fill="none" stroke="#f0222e" stroke-width="1.200"/><path d="M0.800 3.400 H15.200" stroke="#f0222e" stroke-width="1.400"/><path d="M3.300 4.200 L3.700 15 a1 1 0 0 0 1 .9 h6.600 a1 1 0 0 0 1 -.9 L12.700 4.200" fill="none" stroke="#f0222e" stroke-width="1.400"/><path d="M5.900 6 V13.400 M8 6 V13.400 M10.100 6 V13.400" stroke="#f0222e" stroke-width="1"/></svg>
  <div class="abs" style="left:35px;top:491px;width:1011px;height:8px;border-radius:4px;background:#2b3041"></div>
  <div class="sec" style="top:505px">地址信息</div>
  <div class="lb" style="left:28px;top:533px">国家</div>
  <div class="in" style="left:120px;top:533px">中国</div>
  <div class="lb" style="left:388px;top:533px">省份</div>
  <div class="in sel" style="left:480px;top:533px">北京市</div>
  <div class="lb" style="left:748px;top:533px">城市</div>
  <div class="in sel" style="left:840px;top:533px">市辖区</div>
  <div class="lb" style="left:28px;top:581px">区域</div>
  <div class="in sel" style="left:120px;top:581px">东城区</div>
  <div class="lb" style="left:388px;top:581px">地址</div>
  <div class="in ph" style="left:480px;top:581px">请输入详细地址</div>
  <div class="lb" style="left:748px;top:581px">定位</div>
  <div class="in ph" style="left:840px;top:581px">请输入定位信息</div>
  <div class="sec" style="top:625px">工商信息</div>
  <div class="lb" style="left:28px;top:653px">注册时间</div>
  <div class="in date" style="left:120px;top:654px"><svg class="abs" style="left:10px;top:8px" width="13" height="12.300" preserveAspectRatio="none" viewBox="0 0 13 13"><rect x="0.600" y="1.700" width="11.800" height="10.600" rx="1" fill="none" stroke="#c3c6cd" stroke-width="1.200"/><path d="M0.600 4.700 H12.400 M3.500 0.200 V2.600 M9.500 0.200 V2.600" stroke="#c3c6cd" stroke-width="1.200" fill="none"/><path d="M2.800 7.100 H10.400 M2.800 9.700 H10.400" stroke="#9fa3ad" stroke-width="1.400" stroke-dasharray="1.500 1.200" fill="none"/></svg>2025-11-04</div>
  <div class="lb" style="left:388px;top:653px">公司性质</div>
  <div class="in sel" style="left:480px;top:653px">民营企业</div>
  <div class="lb" style="left:748px;top:653px">人员规模</div>
  <div class="in sel" style="left:840px;top:653px"><b style="font-weight:bold">10</b>人以下</div>
  <div class="lb" style="left:28px;top:702px">法人代表</div>
  <div class="in" style="left:120px;top:702px"></div>
  <div class="lb" style="left:388px;top:702px">注册资本</div>
  <div class="in" style="left:480px;top:702px"></div>
  <div class="lb" style="left:748px;top:702px">所属行业</div>
  <div class="in sel" style="left:840px;top:702px">制造业</div>
  <div class="lb" style="left:28px;top:750px">附件</div>
  <div class="abs" style="left:120px;top:751px;width:70px;height:32px;border-radius:3px;background:#3875ff;color:#fff;font-size:12px;font-weight:bold;line-height:32px;text-align:center">附件上传</div>
  <div class="lb" style="left:388px;top:750px">备注</div>
  <div class="in" style="left:480px;top:750px"></div>
</div>
</body>
</html>
